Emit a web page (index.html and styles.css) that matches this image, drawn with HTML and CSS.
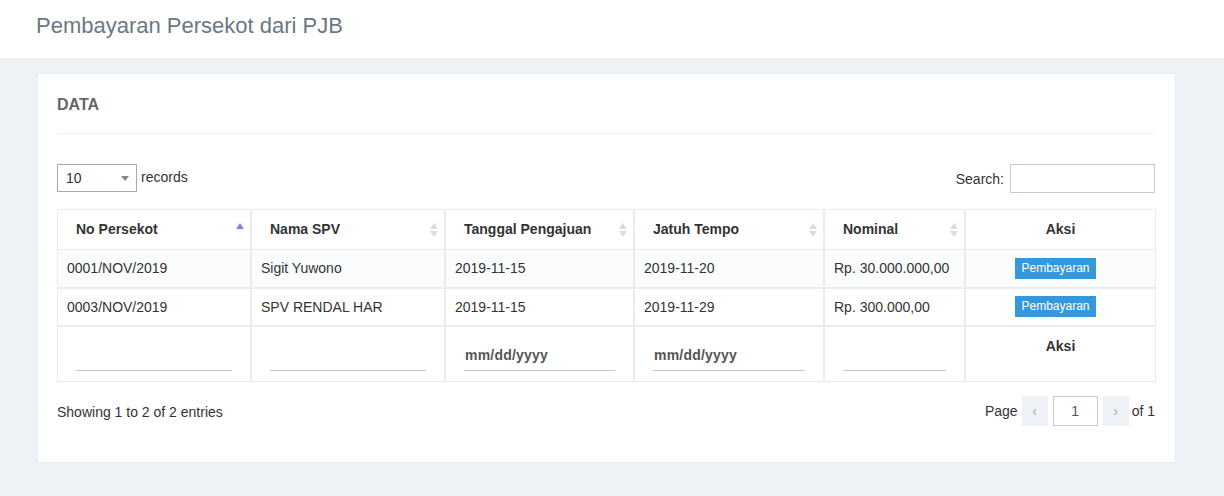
FILE: index.html
```html
<!DOCTYPE html>
<html>
<head>
<meta charset="utf-8">
<link rel="stylesheet" href="styles.css">
</head>
<body>
<header class="page-head">
  <h1 class="page-title">Pembayaran Persekot dari PJB</h1>
</header>
<main class="page-content">
  <section class="portlet">
    <div class="portlet-title">
      <span class="caption">DATA</span>
    </div>
    <div class="portlet-body">
      <div class="toolbar">
        <div class="length">
          <div class="select">
            <span>10</span>
            <span class="caret"></span>
          </div>
          <span class="length-label">records</span>
        </div>
        <div class="search">
          <label>Search:</label>
          <input class="search-input" type="text">
        </div>
      </div>
      <table class="grid">
        <colgroup>
          <col style="width:194px">
          <col style="width:194px">
          <col style="width:189px">
          <col style="width:190px">
          <col style="width:141px">
          <col>
        </colgroup>
        <thead>
          <tr>
            <th class="sortable">No Persekot<span class="sort asc"><i class="up"></i></span></th>
            <th class="sortable">Nama SPV<span class="sort"><i class="up"></i><i class="down"></i></span></th>
            <th class="sortable">Tanggal Pengajuan<span class="sort"><i class="up"></i><i class="down"></i></span></th>
            <th class="sortable">Jatuh Tempo<span class="sort"><i class="up"></i><i class="down"></i></span></th>
            <th class="sortable">Nominal<span class="sort"><i class="up"></i><i class="down"></i></span></th>
            <th class="center">Aksi</th>
          </tr>
        </thead>
        <tbody>
          <tr class="odd">
            <td>0001/NOV/2019</td>
            <td>Sigit Yuwono</td>
            <td>2019-11-15</td>
            <td>2019-11-20</td>
            <td>Rp. 30.000.000,00</td>
            <td class="center"><button class="btn-pay">Pembayaran</button></td>
          </tr>
          <tr>
            <td>0003/NOV/2019</td>
            <td>SPV RENDAL HAR</td>
            <td>2019-11-15</td>
            <td>2019-11-29</td>
            <td>Rp. 300.000,00</td>
            <td class="center"><button class="btn-pay">Pembayaran</button></td>
          </tr>
        </tbody>
        <tfoot>
          <tr class="filter">
            <td><div class="line-input"></div></td>
            <td><div class="line-input"></div></td>
            <td><div class="line-input date">mm/dd/yyyy</div></td>
            <td><div class="line-input date">mm/dd/yyyy</div></td>
            <td><div class="line-input"></div></td>
            <td class="center aksi-foot">Aksi</td>
          </tr>
        </tfoot>
      </table>
      <div class="footer">
        <span class="info">Showing 1 to 2 of 2 entries</span>
        <div class="pager">
          <span class="pg-label">Page</span>
          <span class="pg-btn">&#8249;</span>
          <span class="pg-input">1</span>
          <span class="pg-btn">&#8250;</span>
          <span class="pg-of">of 1</span>
        </div>
      </div>
    </div>
  </section>
</main>
</body>
</html>
```

FILE: styles.css
```css
* { box-sizing: border-box; }
html, body {
  margin: 0;
  padding: 0;
  background: #eef1f5;
  font-family: "Liberation Sans", Arial, sans-serif;
  font-size: 14px;
  color: #333;
}
.page-head {
  background: #fff;
  height: 58px;
  padding: 13px 36px 0;
}
.page-title {
  margin: 0;
  font-size: 22px;
  font-weight: 400;
  line-height: 26px;
  color: #697882;
}
.page-content {
  padding: 15px 0 34px 37px;
}
.portlet {
  width: 1139px;
  background: #fff;
  border: 1px solid #e7ecf1;
  padding: 0 20px 35px 19px;
}
.portlet-title {
  padding: 21px 0 18px;
  border-bottom: 1px solid #eef1f5;
}
.caption {
  display: block;
  font-size: 16px;
  line-height: 20px;
  font-weight: 700;
  color: #666;
}
.toolbar {
  display: flex;
  justify-content: space-between;
  align-items: flex-start;
  margin-top: 30px;
  height: 29px;
}
.length {
  display: flex;
  align-items: flex-start;
}
.select {
  width: 80px;
  height: 28px;
  border: 1px solid #a9a9a9;
  display: flex;
  align-items: center;
  justify-content: space-between;
  padding: 0 7px 0 8px;
  font-size: 14px;
  color: #333;
}
.caret {
  width: 0;
  height: 0;
  border-left: 4px solid transparent;
  border-right: 4px solid transparent;
  border-top: 5px solid #888;
}
.length-label {
  margin-left: 4px;
  line-height: 26px;
  color: #333;
}
.search {
  display: flex;
  align-items: center;
}
.search label {
  margin-right: 6px;
  color: #333;
}
.search-input {
  width: 145px;
  height: 29px;
  border: 1px solid #c2cad8;
  outline: none;
  margin: 0;
}
.grid {
  width: 1099px;
  margin-top: 16px;
  border-collapse: separate;
  border-spacing: 0;
  table-layout: fixed;
}
.grid th, .grid td {
  border: 1px solid #e7ecf1;
  text-align: left;
  vertical-align: middle;
}
.grid th {
  height: 40px;
  font-weight: 700;
  padding: 0 18px 1px;
  position: relative;
  color: #333;
}
.grid thead th { border-bottom: 0; }
.grid tbody td {
  height: 38px;
  padding: 0 9px 1px;
}
.grid tbody tr:first-child td { height: 39px; }
.grid .odd td { background: #fbfcfd; }
.grid .center { text-align: center; }
.sort {
  position: absolute;
  right: 6px;
  top: 13px;
  display: flex;
  flex-direction: column;
  gap: 2px;
}
.sort i {
  display: block;
  width: 0;
  height: 0;
  border-left: 4px solid transparent;
  border-right: 4px solid transparent;
}
.sort .up { border-bottom: 6px solid #d9dbdf; }
.sort .down { border-top: 6px solid #d9dbdf; }
.sort.asc .up { border-bottom-color: #8088d4; }
.btn-pay {
  background: #3598dc;
  color: #fff;
  border: 0;
  font-family: "Liberation Sans", Arial, sans-serif;
  font-size: 12px;
  height: 21px;
  line-height: 21px;
  padding: 0 6px;
  margin: 0 10px 0 0;
  cursor: pointer;
}
.filter td {
  height: 56px;
  padding: 0 18px;
  vertical-align: bottom;
}
.line-input {
  height: 30px;
  border-bottom: 1px solid #c2cad8;
  margin-bottom: 10px;
}
.line-input.date {
  font-size: 14px;
  font-weight: 700;
  color: #555;
  line-height: 28px;
  padding-left: 1px;
  letter-spacing: 0.2px;
}
.grid tfoot .aksi-foot {
  vertical-align: top;
  padding-top: 11px;
  font-weight: 700;
}
.footer {
  display: flex;
  justify-content: space-between;
  align-items: center;
  margin-top: 14px;
  height: 30px;
}
.info { color: #333; margin-top: 2px; }
.pager {
  display: flex;
  align-items: center;
  gap: 5px;
  color: #333;
}
.pg-label { margin-right: -1px; }
.pg-btn {
  width: 26px;
  height: 30px;
  background: #eef1f5;
  color: #aaa;
  display: flex;
  align-items: center;
  justify-content: center;
  font-size: 14px;
}
.pg-input {
  width: 45px;
  height: 30px;
  border: 1px solid #c2cad8;
  display: flex;
  align-items: center;
  justify-content: center;
  color: #555;
}
.pg-of { margin-left: -2px; }
.portlet { padding-bottom: 36px; }
```
